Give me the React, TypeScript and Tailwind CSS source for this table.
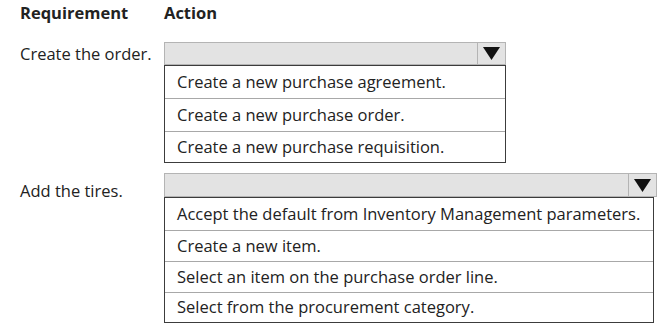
const Caret = () => (
    <svg width="17" height="13" viewBox="0 0 17 13" className="block">
        <polygon points="0,0 17,0 8.5,13" fill="#111" />
    </svg>
);

type DropProps = { options: string[]; listW: string; headW: string; headH: string; rowH: string[] };

const Dropdown = ({ options, listW, headW, headH, rowH }: DropProps) => (
    <div className="flex flex-col">
        <div className={`${headW} ${headH} flex bg-[#e3e3e3] border border-[#b4b4b4]`}>
            <div className="flex-1" />
            <div className="w-[28px] border-l border-[#b4b4b4] flex items-center justify-center">
                <Caret />
            </div>
        </div>
        <div className={`${listW} border border-t-0 border-[#3c3c3c] bg-white`}>
            {options.map((o, i) => (
                <div
                    key={o}
                    className={`${rowH[i]} flex items-center pl-[12px] border-t ${i > 0 ? 'border-[#a8a8a8]' : 'border-[#3c3c3c]'}`}
                >
                    {o}
                </div>
            ))}
        </div>
    </div>
);

export default function App() {
    return (
        <div className="w-[660px] h-[329px] bg-white text-[#222] text-[16.5px] font-['Open_Sans',sans-serif] overflow-hidden">
            <div className="flex pt-[1px] h-[42px] font-bold text-[16.5px]">
                <div className="w-[164px] pl-[20px]">Requirement</div>
                <div>Action</div>
            </div>

            <div className="flex">
                <div className="w-[164px] pl-[20px]">Create the order.</div>
                <Dropdown
                    headW="w-[342px]"
                    listW="w-[342px]"
                    headH="h-[23px]"
                    rowH={['h-[33px]', 'h-[33px]', 'h-[31px]']}
                    options={[
                        'Create a new purchase agreement.',
                        'Create a new purchase order.',
                        'Create a new purchase requisition.',
                    ]}
                />
            </div>

            <div className="flex mt-[10px]">
                <div className="w-[164px] pl-[20px] pt-[6px]">Add the tires.</div>
                <Dropdown
                    headW="w-[493px]"
                    listW="w-[490px]"
                    headH="h-[24px]"
                    rowH={['h-[33px]', 'h-[31px]', 'h-[31px]', 'h-[30px]']}
                    options={[
                        'Accept the default from Inventory Management parameters.',
                        'Create a new item.',
                        'Select an item on the purchase order line.',
                        'Select from the procurement category.',
                    ]}
                />
            </div>
        </div>
    );
}
